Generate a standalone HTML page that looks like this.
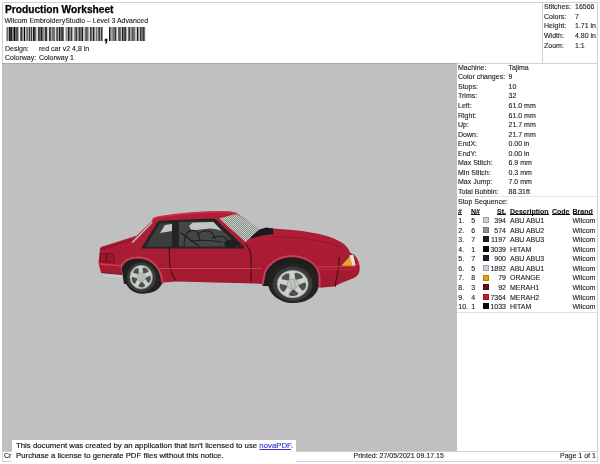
<!DOCTYPE html>
<html><head><meta charset="utf-8">
<style>
*{margin:0;padding:0;box-sizing:border-box}
html,body{width:600px;height:464px;background:#fff;overflow:hidden;position:relative;font-family:"Liberation Sans",sans-serif;color:#1e1e1e}
.a{position:absolute;white-space:nowrap}
.ln{position:absolute;background:#d2d2d2}
.t7{font-size:7px;line-height:9.57px;-webkit-text-stroke:0.12px #1e1e1e}
.rows div{height:9.57px;line-height:9.57px;position:relative}
.rows span{position:absolute;top:0}
.th{font-weight:bold;color:#111}
.th span{border-bottom:1.2px solid #111;display:inline-block;line-height:5.6px;padding-bottom:0}
.r{text-align:right}
.sw{width:6px;height:6px;border:1px solid rgba(0,0,0,.22)}
</style></head><body><div id="wrap" style="position:absolute;left:0;top:0;width:600px;height:464px;will-change:transform">
<!-- outer border -->
<div class="ln" style="left:2px;top:2px;width:596px;height:1px"></div>
<div class="ln" style="left:2px;top:2px;width:1px;height:460px"></div>
<div class="ln" style="left:597px;top:2px;width:1px;height:460px"></div>
<div class="ln" style="left:2px;top:461px;width:596px;height:1px"></div>
<!-- header -->
<div class="a" style="left:5px;top:4.4px;font-size:10.2px;font-weight:bold;color:#000;line-height:12px;-webkit-text-stroke:0.25px #000">Production Worksheet</div>
<div class="a" style="left:4.5px;top:16.2px;font-size:7px;line-height:9px;-webkit-text-stroke:0.12px #1e1e1e">Wilcom EmbroideryStudio – Level 3 Advanced</div>
<!--BC--><svg class="a" style="left:0;top:0" width="150" height="46" viewBox="0 0 150 46"><rect x="6" y="27" width="1" height="14" fill="#aaaaaa"/><rect x="7" y="27" width="1" height="14" fill="#717171"/><rect x="8" y="27" width="1" height="14" fill="#aaaaaa"/><rect x="9" y="27" width="1" height="14" fill="#1c1c1c"/><rect x="10" y="27" width="1" height="14" fill="#393939"/><rect x="11" y="27" width="1" height="14" fill="#1c1c1c"/><rect x="12" y="27" width="1" height="14" fill="#8e8e8e"/><rect x="13" y="27" width="1" height="14" fill="#717171"/><rect x="14" y="27" width="1" height="14" fill="#000000"/><rect x="15" y="27" width="1" height="14" fill="#717171"/><rect x="16" y="27" width="1" height="14" fill="#555555"/><rect x="17" y="27" width="1" height="14" fill="#555555"/><rect x="18" y="27" width="1" height="14" fill="#aaaaaa"/><rect x="20" y="27" width="1" height="14" fill="#717171"/><rect x="21" y="27" width="1" height="14" fill="#393939"/><rect x="22" y="27" width="1" height="14" fill="#8e8e8e"/><rect x="23" y="27" width="1" height="14" fill="#aaaaaa"/><rect x="24" y="27" width="1" height="14" fill="#000000"/><rect x="25" y="27" width="1" height="14" fill="#c6c6c6"/><rect x="26" y="27" width="1" height="14" fill="#8e8e8e"/><rect x="27" y="27" width="1" height="14" fill="#717171"/><rect x="28" y="27" width="1" height="14" fill="#aaaaaa"/><rect x="29" y="27" width="1" height="14" fill="#393939"/><rect x="30" y="27" width="1" height="14" fill="#aaaaaa"/><rect x="31" y="27" width="1" height="14" fill="#393939"/><rect x="32" y="27" width="1" height="14" fill="#c6c6c6"/><rect x="33" y="27" width="1" height="14" fill="#1c1c1c"/><rect x="34" y="27" width="1" height="14" fill="#393939"/><rect x="35" y="27" width="1" height="14" fill="#717171"/><rect x="36" y="27" width="1" height="14" fill="#c6c6c6"/><rect x="37" y="27" width="1" height="14" fill="#e3e3e3"/><rect x="38" y="27" width="1" height="14" fill="#393939"/><rect x="39" y="27" width="1" height="14" fill="#555555"/><rect x="40" y="27" width="1" height="14" fill="#717171"/><rect x="41" y="27" width="1" height="14" fill="#1c1c1c"/><rect x="42" y="27" width="1" height="14" fill="#717171"/><rect x="43" y="27" width="1" height="14" fill="#8e8e8e"/><rect x="44" y="27" width="1" height="14" fill="#aaaaaa"/><rect x="45" y="27" width="1" height="14" fill="#393939"/><rect x="46" y="27" width="1" height="14" fill="#393939"/><rect x="47" y="27" width="1" height="14" fill="#c6c6c6"/><rect x="48" y="27" width="1" height="14" fill="#e3e3e3"/><rect x="49" y="27" width="1" height="14" fill="#393939"/><rect x="50" y="27" width="1" height="14" fill="#555555"/><rect x="51" y="27" width="1" height="14" fill="#aaaaaa"/><rect x="52" y="27" width="1" height="14" fill="#717171"/><rect x="53" y="27" width="1" height="14" fill="#717171"/><rect x="54" y="27" width="1" height="14" fill="#717171"/><rect x="55" y="27" width="1" height="14" fill="#e3e3e3"/><rect x="56" y="27" width="1" height="14" fill="#717171"/><rect x="57" y="27" width="1" height="14" fill="#555555"/><rect x="58" y="27" width="1" height="14" fill="#aaaaaa"/><rect x="59" y="27" width="1" height="14" fill="#1c1c1c"/><rect x="60" y="27" width="1" height="14" fill="#717171"/><rect x="61" y="27" width="1" height="14" fill="#555555"/><rect x="62" y="27" width="1" height="14" fill="#393939"/><rect x="63" y="27" width="1" height="14" fill="#717171"/><rect x="65" y="27" width="1" height="14" fill="#c6c6c6"/><rect x="66" y="27" width="1" height="14" fill="#8e8e8e"/><rect x="67" y="27" width="1" height="14" fill="#aaaaaa"/><rect x="68" y="27" width="1" height="14" fill="#1c1c1c"/><rect x="69" y="27" width="1" height="14" fill="#717171"/><rect x="70" y="27" width="1" height="14" fill="#8e8e8e"/><rect x="71" y="27" width="1" height="14" fill="#393939"/><rect x="72" y="27" width="1" height="14" fill="#aaaaaa"/><rect x="73" y="27" width="1" height="14" fill="#e3e3e3"/><rect x="74" y="27" width="1" height="14" fill="#8e8e8e"/><rect x="75" y="27" width="1" height="14" fill="#717171"/><rect x="76" y="27" width="1" height="14" fill="#393939"/><rect x="77" y="27" width="1" height="14" fill="#aaaaaa"/><rect x="78" y="27" width="1" height="14" fill="#8e8e8e"/><rect x="79" y="27" width="1" height="14" fill="#393939"/><rect x="80" y="27" width="1" height="14" fill="#717171"/><rect x="81" y="27" width="1" height="14" fill="#717171"/><rect x="82" y="27" width="1" height="14" fill="#1c1c1c"/><rect x="83" y="27" width="1" height="14" fill="#c6c6c6"/><rect x="84" y="27" width="1" height="14" fill="#c6c6c6"/><rect x="85" y="27" width="1" height="14" fill="#717171"/><rect x="86" y="27" width="1" height="14" fill="#555555"/><rect x="87" y="27" width="1" height="14" fill="#717171"/><rect x="88" y="27" width="1" height="14" fill="#aaaaaa"/><rect x="89" y="27" width="1" height="14" fill="#e3e3e3"/><rect x="90" y="27" width="1" height="14" fill="#393939"/><rect x="91" y="27" width="1" height="14" fill="#717171"/><rect x="92" y="27" width="1" height="14" fill="#aaaaaa"/><rect x="93" y="27" width="1" height="14" fill="#1c1c1c"/><rect x="94" y="27" width="1" height="14" fill="#8e8e8e"/><rect x="95" y="27" width="1" height="14" fill="#c6c6c6"/><rect x="96" y="27" width="1" height="14" fill="#717171"/><rect x="97" y="27" width="1" height="14" fill="#aaaaaa"/><rect x="98" y="27" width="1" height="14" fill="#717171"/><rect x="99" y="27" width="1" height="14" fill="#393939"/><rect x="100" y="27" width="1" height="14" fill="#aaaaaa"/><rect x="101" y="27" width="1" height="14" fill="#393939"/><rect x="102" y="27" width="1" height="14" fill="#8e8e8e"/><rect x="109" y="27" width="1" height="14" fill="#1c1c1c"/><rect x="110" y="27" width="1" height="14" fill="#717171"/><rect x="111" y="27" width="1" height="14" fill="#aaaaaa"/><rect x="112" y="27" width="1" height="14" fill="#8e8e8e"/><rect x="113" y="27" width="1" height="14" fill="#717171"/><rect x="114" y="27" width="1" height="14" fill="#717171"/><rect x="115" y="27" width="1" height="14" fill="#393939"/><rect x="116" y="27" width="1" height="14" fill="#aaaaaa"/><rect x="117" y="27" width="1" height="14" fill="#e3e3e3"/><rect x="118" y="27" width="1" height="14" fill="#717171"/><rect x="119" y="27" width="1" height="14" fill="#555555"/><rect x="120" y="27" width="1" height="14" fill="#717171"/><rect x="121" y="27" width="1" height="14" fill="#c6c6c6"/><rect x="122" y="27" width="1" height="14" fill="#1c1c1c"/><rect x="123" y="27" width="1" height="14" fill="#717171"/><rect x="124" y="27" width="1" height="14" fill="#555555"/><rect x="125" y="27" width="1" height="14" fill="#393939"/><rect x="126" y="27" width="1" height="14" fill="#aaaaaa"/><rect x="127" y="27" width="1" height="14" fill="#e3e3e3"/><rect x="128" y="27" width="1" height="14" fill="#717171"/><rect x="129" y="27" width="1" height="14" fill="#393939"/><rect x="130" y="27" width="1" height="14" fill="#aaaaaa"/><rect x="131" y="27" width="1" height="14" fill="#8e8e8e"/><rect x="132" y="27" width="1" height="14" fill="#555555"/><rect x="133" y="27" width="1" height="14" fill="#717171"/><rect x="134" y="27" width="1" height="14" fill="#717171"/><rect x="135" y="27" width="1" height="14" fill="#c6c6c6"/><rect x="136" y="27" width="1" height="14" fill="#c6c6c6"/><rect x="137" y="27" width="1" height="14" fill="#1c1c1c"/><rect x="138" y="27" width="1" height="14" fill="#8e8e8e"/><rect x="139" y="27" width="1" height="14" fill="#c6c6c6"/><rect x="140" y="27" width="1" height="14" fill="#393939"/><rect x="141" y="27" width="1" height="14" fill="#717171"/><rect x="142" y="27" width="1" height="14" fill="#717171"/><rect x="143" y="27" width="1" height="14" fill="#393939"/><rect x="144" y="27" width="1" height="14" fill="#717171"/><rect x="145" y="27" width="1" height="14" fill="#e3e3e3"/><path d="M104.8 38.8 L107.3 38.8 L107.3 41.8 Q106.8 43.5 105.3 44 L105 43.2 Q105.9 42.6 106 41.5 L104.8 41.5 Z" fill="#111"/></svg><!--/BC-->
<div class="a t7" style="left:5px;top:43.7px">Design:</div>
<div class="a t7" style="left:39px;top:43.7px">red car v2 4,8 in</div>
<div class="a t7" style="left:5px;top:53.4px">Colorway:</div>
<div class="a t7" style="left:39px;top:53.4px">Colorway 1</div>
<div class="ln" style="left:542px;top:2px;width:1px;height:61px"></div>
<div class="a t7 rows" style="left:544px;top:2.3px;width:53px">
<div><span>Stitches:</span><span style="left:31px">16566</span></div>
<div><span>Colors:</span><span style="left:31px">7</span></div>
<div><span>Height:</span><span style="left:31px">1.71 in</span></div>
<div><span>Width:</span><span style="left:31px">4.80 in</span></div>
<div><span>Zoom:</span><span style="left:31px">1:1</span></div>
</div>
<div class="ln" style="left:2px;top:63px;width:455px;height:1px;background:#a8a8a8"></div>
<div class="ln" style="left:457px;top:63px;width:140px;height:1px"></div>
<!-- gray area -->
<div class="a" style="left:2px;top:64px;width:455px;height:387px;background:#c0c0c0"></div>
<!--CAR--><svg class="a" style="left:0;top:0" width="600" height="464" viewBox="0 0 600 464">
<defs>
<pattern id="hatch" width="2" height="2" patternUnits="userSpaceOnUse"><rect width="2" height="2" fill="#8c948c"/><rect width="1" height="1" fill="#c8cec8"/><rect x="1" y="1" width="1" height="1" fill="#bcc2bc"/></pattern>
<linearGradient id="bodyg" x1="0" y1="0" x2="0" y2="1">
<stop offset="0" stop-color="#b21e37"/><stop offset="0.6" stop-color="#aa1c34"/><stop offset="1" stop-color="#a01a30"/>
</linearGradient>
</defs>
<!-- wheel wells -->
<path d="M121.5 268 C124 260 131 256.5 139 256.5 C150 257 158 265 161 275 L162.5 284 L124 284 Z" fill="#1e1e1e"/>
<path d="M262.6 286 L265 272 C270 262 280 255.5 294 255.5 C310 257 318 266 319.5 276 L319.5 287 Z" fill="#1e1e1e"/>
<ellipse cx="146" cy="277.6" rx="17.5" ry="15.6" fill="#232323"/>
<ellipse cx="296" cy="283.6" rx="23" ry="19" fill="#232323"/>
<!-- body -->
<path d="M98.5 263.5 L100 248 Q101 246.5 104 246 L136.5 235.8 L151.5 221.5 Q154 218 160 216.3 C185 212.5 210 211 228 211.5 Q236 211.5 238 214 L260 229.5 L273 228.5 C300 230 325 233 340 241.5 Q347 245 350.5 253 L354 254.5 Q358.5 259 359.7 266.5 Q359.8 272 358.6 274 Q356 277.5 352.7 278.4 L342 282.7 L334 286.5 L319.3 287.8 L319.5 276 C318 266 310 258 294 256 C280 256 270 262 265 272 L262.6 284 L255 283.5 L176 281.5 L162.5 282.5 L161 275 C158 265 150 258 139 257.5 C130 258 124 262 121.5 266 L122 274.5 L101 272.5 Z" fill="url(#bodyg)"/>
<!-- rear deck shadow + taillights -->
<path d="M100 248.5 L131 239 L131 241 L102 250 Z" fill="#8e1428" opacity="0.8"/>
<path d="M100 253 L114.5 253.5 L114.5 262.5 L100 262 Z" fill="#6e0e1e"/>
<path d="M100.8 254 L105.6 254.1 L105.6 261.4 L100.8 261.2 Z" fill="#9c1a30"/>
<path d="M107.4 254.3 L113.6 254.5 L113.6 261.7 L107.4 261.5 Z" fill="#9c1a30"/>
<path d="M98.8 264 L121.5 265.7" stroke="#cf3a55" stroke-width="1.4" fill="none"/>
<path d="M101 272.5 L122 274.5" stroke="#7c1224" stroke-width="1" fill="none"/>
<path d="M105 275.8 L122 276.2" stroke="#d6dad6" stroke-width="1" fill="none"/>
<!-- C pillar strip -->

<!-- tires -->

<ellipse cx="142.2" cy="277.2" rx="17.6" ry="16.6" fill="#222"/>
<ellipse cx="141.6" cy="277.4" rx="14.5" ry="14.6" fill="#3a3a3a"/>
<ellipse cx="292.4" cy="283.1" rx="24.2" ry="19.8" fill="#222"/>
<ellipse cx="292.6" cy="283.9" rx="20" ry="17.3" fill="#3a3a3a"/>
<ellipse cx="141.2" cy="277.2" rx="11.3" ry="11.9" fill="#cdd1cb" stroke="#7e827e" stroke-width="0.7"/>
<polygon points="145.70,277.66 150.00,275.57 150.91,277.56 150.63,279.68 149.93,281.69 148.25,283.00 145.38,279.01" fill="#4e524e"/>
<polygon points="142.17,281.85 145.40,285.51 143.88,287.04 141.88,287.41 139.85,287.33 138.14,286.05 140.85,281.95" fill="#4e524e"/>
<polygon points="137.30,279.61 134.99,283.97 133.14,282.92 132.19,281.03 131.63,278.98 132.26,276.87 136.81,278.32" fill="#4e524e"/>
<polygon points="137.82,274.04 133.16,273.07 133.54,270.90 134.95,269.36 136.64,268.16 138.74,268.15 138.83,273.15" fill="#4e524e"/>
<polygon points="143.01,272.84 142.44,267.88 144.52,267.58 146.35,268.52 147.95,269.84 148.61,271.94 144.13,273.58" fill="#4e524e"/>
<ellipse cx="141.2" cy="277.2" rx="4.07" ry="4.28" fill="#c4c8c2" stroke="#8a8e8a" stroke-width="0.6"/>
<path d="M138.94 274.22 Q141.20 277.80 140.07 280.77 M141.76 273.63 Q144.02 277.20 142.33 280.53" stroke="#8a8e8a" stroke-width="0.6" fill="none"/>
<ellipse cx="292.7" cy="284.1" rx="15.7" ry="13.9" fill="#cdd1cb" stroke="#7e827e" stroke-width="0.7"/>
<polygon points="298.95,284.64 304.93,282.19 306.19,284.52 305.80,286.99 304.84,289.34 302.49,290.87 298.51,286.22" fill="#4e524e"/>
<polygon points="294.05,289.53 298.53,293.81 296.42,295.59 293.64,296.02 290.82,295.94 288.45,294.43 292.22,289.64" fill="#4e524e"/>
<polygon points="287.28,286.91 284.07,292.01 281.51,290.78 280.18,288.58 279.40,286.18 280.29,283.72 286.60,285.41" fill="#4e524e"/>
<polygon points="288.00,280.41 281.54,279.28 282.06,276.74 284.02,274.94 286.36,273.55 289.28,273.53 289.41,279.36" fill="#4e524e"/>
<polygon points="295.21,279.01 294.43,273.21 297.32,272.87 299.85,273.96 302.08,275.50 303.00,277.95 296.77,279.87" fill="#4e524e"/>
<ellipse cx="292.7" cy="284.1" rx="5.65" ry="5.00" fill="#c4c8c2" stroke="#8a8e8a" stroke-width="0.6"/>
<path d="M289.56 280.62 Q292.70 284.80 291.13 288.27 M293.49 279.93 Q296.62 284.10 294.27 287.99" stroke="#8a8e8a" stroke-width="0.6" fill="none"/>
<!-- windows -->
<path d="M141 248.5 L157.5 222 Q159 220.7 162 220.5 L213 218.5 Q215 218.5 216.5 220 L244 246.5 L244 248.5 Z" fill="#242424"/>
<path d="M146 246.5 L159.5 223.5 L172 223 L172 246.5 Z" fill="#3c3e3c"/>
<path d="M160 233 L165 225 L172 224 L172 231 Z" fill="#c6cac6"/>
<path d="M179 246.5 L179 222 L213 221.5 L239 246.5 Z" fill="#454745"/>
<path d="M189 226 L192.5 222.6 L213.5 222 L221.7 230.7 Q216 229 211 228.5 Q205 229 200 229.5 Q195 230 192 231 Z" fill="#c2c6c2"/>
<g fill="none" stroke="#1e1e1e" stroke-width="1.1" stroke-linecap="round">
<path d="M181 233 Q189 239 199 246"/>
<path d="M184 246 Q184 238 187 233 Q191 229 196 231 Q199 234 200 240"/>
<path d="M198 234 Q203 230 209 231 Q214 233 215 239"/>
<path d="M212 238 Q218 235 224 237 Q228 240 229 243"/>
<path d="M190 241 Q205 239 222 242"/>
</g>
<path d="M224 244 Q225 239.5 231 239.5 Q237 240 239 244.5 Q236 247.8 230 247.6 Q225 247.3 224 244 Z" fill="#1e1e1e"/>
<path d="M132.2 242.6 L152.2 222.2" stroke="#b4beb4" stroke-width="1.5" fill="none"/>
<!-- windshield -->
<path d="M219 218.5 L236.5 213.8 L260.5 229.2 L251 237 L245.5 242 Z" fill="url(#hatch)"/>
<!-- cowl -->
<path d="M259.5 229.5 L266 227.5 L273 228.5 L273.5 234 L262 235.5 L251 238.5 L251 237 Z" fill="#1a1a1a"/>
<!-- lights -->
<path d="M341.4 265.7 L349.5 256.8 L352.4 265.7 Z" fill="#e8a820"/>
<path d="M349.3 255.4 L353.2 254.4 L355.6 265.2 L352.4 265.7 Z" fill="#e6e6de"/>
<!-- lines -->
<g fill="none" stroke-linecap="round">
<path d="M169 248 L170 268 Q172 276 176 280.5" stroke="#3a0a12" stroke-width="1"/>
<path d="M246 244 Q251 250 251 256 L251 281" stroke="#3a0a12" stroke-width="1"/>
<path d="M339.2 256.9 L338.2 269.8 L336 280.6 L335.3 286.5" stroke="#3a0a12" stroke-width="1"/>
<path d="M273 236.5 C300 237.5 322 239.5 340 247" stroke="#8e1428" stroke-width="0.9"/>
<path d="M160 268.5 L262 268.5" stroke="#cf3a55" stroke-width="1"/>
<path d="M161 270.5 L262 270.5" stroke="#9c182e" stroke-width="0.8"/>
<path d="M318 267 L355 266.5 Q358 265 359 262" stroke="#cf3a55" stroke-width="1"/>
<path d="M319 269.8 L357.6 269.2" stroke="#c02c46" stroke-width="0.8"/>
<path d="M121.5 266 C124 260 131 257.5 139 257.5 C150 258 158 265 161 275 L162.5 282.5" stroke="#cd3c57" stroke-width="2"/>
<path d="M262.6 284 L265 272 C270 262 280 256 294 256 C310 258 318 266 319.5 276 L319.5 286" stroke="#cd3c57" stroke-width="2"/>
<path d="M153 219.5 Q155 217.3 160 216.8 C185 213 210 211.5 228 212 Q233 212.2 236 214" stroke="#c8304a" stroke-width="1.6"/>
</g>
</svg><!--/CAR-->
<!-- right panel -->
<div class="a t7 rows" style="left:458px;top:62.7px;width:139px">
<div><span>Machine:</span><span style="left:50.5px">Tajima</span></div>
<div><span>Color changes:</span><span style="left:50.5px">9</span></div>
<div><span>Stops:</span><span style="left:50.5px">10</span></div>
<div><span>Trims:</span><span style="left:50.5px">32</span></div>
<div><span>Left:</span><span style="left:50.5px">61.0 mm</span></div>
<div><span>Right:</span><span style="left:50.5px">61.0 mm</span></div>
<div><span>Up:</span><span style="left:50.5px">21.7 mm</span></div>
<div><span>Down:</span><span style="left:50.5px">21.7 mm</span></div>
<div><span>EndX:</span><span style="left:50.5px">0.00 in</span></div>
<div><span>EndY:</span><span style="left:50.5px">0.00 in</span></div>
<div><span>Max Stitch:</span><span style="left:50.5px">6.9 mm</span></div>
<div><span>Min Stitch:</span><span style="left:50.5px">0.3 mm</span></div>
<div><span>Max Jump:</span><span style="left:50.5px">7.0 mm</span></div>
<div><span>Total Bobbin:</span><span style="left:50.5px">88.31ft</span></div>
</div>
<div class="ln" style="left:457px;top:196px;width:140px;height:1px;background:#e6e6e6"></div>
<div class="a t7" style="left:458px;top:197.1px">Stop Sequence:</div>
<div class="a t7 th" style="left:458px;top:206.6px"><span>#</span></div>
<div class="a t7 th" style="left:471px;top:206.6px"><span>N#</span></div>
<div class="a t7 th r" style="left:465px;width:41px;top:206.6px"><span>St.</span></div>
<div class="a t7 th" style="left:510px;top:206.6px"><span>Description</span></div>
<div class="a t7 th" style="left:552px;top:206.6px"><span>Code</span></div>
<div class="a t7 th" style="left:572.5px;top:206.6px"><span>Brand</span></div>
<div class="a t7" style="left:458.3px;top:216.07px">1.</div>
<div class="a t7" style="left:471.3px;top:216.07px">5</div>
<div class="a sw" style="left:482.5px;top:217.17px;background:#c8d2dc"></div>
<div class="a t7 r" style="left:465px;width:41px;top:216.07px">394</div>
<div class="a t7" style="left:510px;top:216.07px">ABU ABU1</div>
<div class="a t7" style="left:572.5px;top:216.07px">Wilcom</div>
<div class="a t7" style="left:458.3px;top:225.64px">2.</div>
<div class="a t7" style="left:471.3px;top:225.64px">6</div>
<div class="a sw" style="left:482.5px;top:226.74px;background:#8c9696"></div>
<div class="a t7 r" style="left:465px;width:41px;top:225.64px">574</div>
<div class="a t7" style="left:510px;top:225.64px">ABU ABU2</div>
<div class="a t7" style="left:572.5px;top:225.64px">Wilcom</div>
<div class="a t7" style="left:458.3px;top:235.21px">3.</div>
<div class="a t7" style="left:471.3px;top:235.21px">7</div>
<div class="a sw" style="left:482.5px;top:236.31px;background:#1c202c"></div>
<div class="a t7 r" style="left:465px;width:41px;top:235.21px">1197</div>
<div class="a t7" style="left:510px;top:235.21px">ABU ABU3</div>
<div class="a t7" style="left:572.5px;top:235.21px">Wilcom</div>
<div class="a t7" style="left:458.3px;top:244.78px">4.</div>
<div class="a t7" style="left:471.3px;top:244.78px">1</div>
<div class="a sw" style="left:482.5px;top:245.88px;background:#080808"></div>
<div class="a t7 r" style="left:465px;width:41px;top:244.78px">3039</div>
<div class="a t7" style="left:510px;top:244.78px">HITAM</div>
<div class="a t7" style="left:572.5px;top:244.78px">Wilcom</div>
<div class="a t7" style="left:458.3px;top:254.35px">5.</div>
<div class="a t7" style="left:471.3px;top:254.35px">7</div>
<div class="a sw" style="left:482.5px;top:255.45px;background:#1c202c"></div>
<div class="a t7 r" style="left:465px;width:41px;top:254.35px">900</div>
<div class="a t7" style="left:510px;top:254.35px">ABU ABU3</div>
<div class="a t7" style="left:572.5px;top:254.35px">Wilcom</div>
<div class="a t7" style="left:458.3px;top:263.92px">6.</div>
<div class="a t7" style="left:471.3px;top:263.92px">5</div>
<div class="a sw" style="left:482.5px;top:265.02px;background:#c8d2dc"></div>
<div class="a t7 r" style="left:465px;width:41px;top:263.92px">1892</div>
<div class="a t7" style="left:510px;top:263.92px">ABU ABU1</div>
<div class="a t7" style="left:572.5px;top:263.92px">Wilcom</div>
<div class="a t7" style="left:458.3px;top:273.49px">7.</div>
<div class="a t7" style="left:471.3px;top:273.49px">8</div>
<div class="a sw" style="left:482.5px;top:274.59px;background:#f39c00"></div>
<div class="a t7 r" style="left:465px;width:41px;top:273.49px">79</div>
<div class="a t7" style="left:510px;top:273.49px">ORANGE</div>
<div class="a t7" style="left:572.5px;top:273.49px">Wilcom</div>
<div class="a t7" style="left:458.3px;top:283.06px">8.</div>
<div class="a t7" style="left:471.3px;top:283.06px">3</div>
<div class="a sw" style="left:482.5px;top:284.16px;background:#6a0a14"></div>
<div class="a t7 r" style="left:465px;width:41px;top:283.06px">92</div>
<div class="a t7" style="left:510px;top:283.06px">MERAH1</div>
<div class="a t7" style="left:572.5px;top:283.06px">Wilcom</div>
<div class="a t7" style="left:458.3px;top:292.63px">9.</div>
<div class="a t7" style="left:471.3px;top:292.63px">4</div>
<div class="a sw" style="left:482.5px;top:293.73px;background:#d0142c"></div>
<div class="a t7 r" style="left:465px;width:41px;top:292.63px">7364</div>
<div class="a t7" style="left:510px;top:292.63px">MERAH2</div>
<div class="a t7" style="left:572.5px;top:292.63px">Wilcom</div>
<div class="a t7" style="left:458.3px;top:302.2px">10.</div>
<div class="a t7" style="left:471.3px;top:302.2px">1</div>
<div class="a sw" style="left:482.5px;top:303.3px;background:#080808"></div>
<div class="a t7 r" style="left:465px;width:41px;top:302.2px">1033</div>
<div class="a t7" style="left:510px;top:302.2px">HITAM</div>
<div class="a t7" style="left:572.5px;top:302.2px">Wilcom</div>
<div class="ln" style="left:457px;top:312px;width:140px;height:1px;background:#e0e0e0"></div>
<!-- footer -->
<div class="ln" style="left:2px;top:451px;width:596px;height:1px"></div>
<div class="a t7" style="left:353.5px;top:450.6px">Printed: 27/05/2021 09.17.15</div>
<div class="a t7" style="left:560px;top:450.6px">Page 1 of 1</div>
<div class="a t7" style="left:4px;top:450.8px">Cr</div>
<!-- notice -->
<div class="a" style="left:12px;top:440px;width:284px;height:22px;background:#fff"></div>
<div class="a" style="left:16px;top:441px;font-size:7.8px;line-height:9.5px;color:#111;-webkit-text-stroke:0.15px #111">This document was created by an application that isn't licensed to use <span style="color:#3434cc;-webkit-text-stroke:0.15px #3434cc;text-decoration:underline">novaPDF</span>.<br>Purchase a license to generate PDF files without this notice.</div>
</div></body></html>
